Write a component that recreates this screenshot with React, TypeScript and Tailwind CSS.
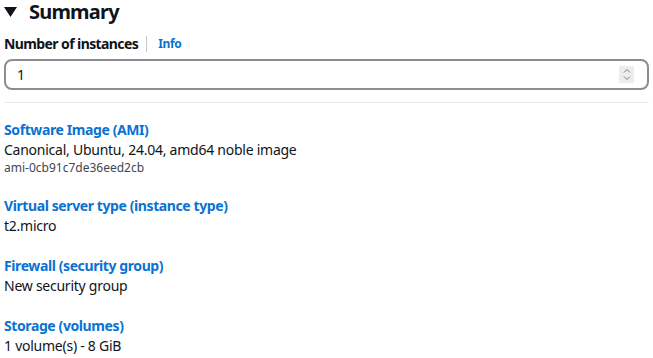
export default function App() {
  const items = [
    { label: 'Virtual server type (instance type)', value: 't2.micro' },
    { label: 'Firewall (security group)', value: 'New security group' },
    { label: 'Storage (volumes)', value: '1 volume(s) - 8 GiB' },
  ]

  return (
    <div className="w-[653px] h-[358px] overflow-hidden bg-white text-[#0f141a]" style={{ fontFamily: '"Noto Sans", "Open Sans", sans-serif' }}>
      {/* Header */}
      <div className="flex items-center h-[24px] pl-[4px] gap-[12px]">
        <svg width="13" height="10" viewBox="0 0 13 10">
          <polygon points="0,0 13,0 6.5,10" fill="#0f141a" />
        </svg>
        <span className="text-[20px] font-bold leading-[24px] tracking-[-0.8px]">Summary</span>
      </div>

      <div className="flex items-center mt-[10px] pl-[4px] h-[20px]">
        <span className="text-[14px] font-bold leading-[20px] tracking-[-0.6px]">Number of instances</span>
        <span className="w-px h-[16px] bg-[#c6c6cd] ml-[8px] mr-[11px]" />
        <span className="text-[12px] font-bold text-[#0972d3] tracking-[-0.3px]">Info</span>
      </div>

      <div className="mt-[5px] mx-[4px] h-[31px] rounded-[8px] border-2 border-[#8c8c94] flex items-center justify-between pl-[11px] pr-[13px]">
        <span className="text-[14px]">1</span>
        <div className="w-[15px] h-[17px] bg-[#ededed] flex items-center justify-center">
          <svg width="8" height="13" viewBox="0 0 8 13" fill="none" stroke="#7a7a7a" strokeWidth="1">
            <path d="M1 4.5 L4 1.5 L7 4.5" />
            <path d="M1 8.5 L4 11.5 L7 8.5" />
          </svg>
        </div>
      </div>

      <div className="mt-[12px] mx-[4px] h-px bg-[#e9ebed]" />

      <div className="pl-[4px] pt-[17px]">
        <div className="text-[14px] font-bold text-[#0972d3] leading-[20px] tracking-[-0.4px]">Software Image (AMI)</div>
        <div className="text-[14px] leading-[20px] tracking-[-0.25px]">Canonical, Ubuntu, 24.04, amd64 noble image</div>
        <div className="text-[12px] leading-[16px] text-[#424650]">ami-0cb91c7de36eed2cb</div>

        {items.map((item) => (
          <div key={item.label} className="mt-[20px]">
            <div className="text-[14px] font-bold text-[#0972d3] leading-[20px] tracking-[-0.4px]">{item.label}</div>
            <div className="text-[14px] leading-[20px] tracking-[-0.25px]">{item.value}</div>
          </div>
        ))}
      </div>
    </div>
  )
}
